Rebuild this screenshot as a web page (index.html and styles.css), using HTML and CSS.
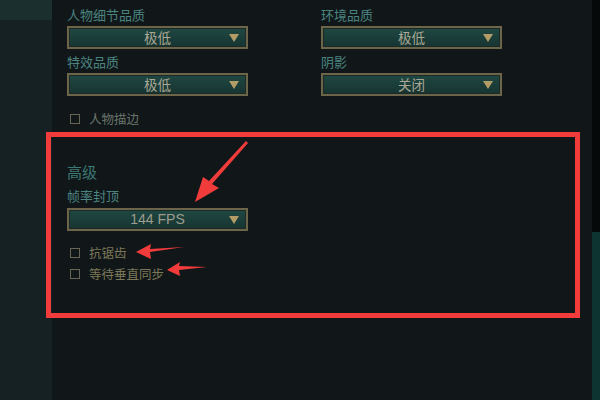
FILE: index.html
```html
<!DOCTYPE html>
<html lang="zh-CN">
<head>
    <meta charset="UTF-8">
    <meta name="viewport" content="width=device-width, initial-scale=1.0">
    <title>视频设置</title>
    <link rel="stylesheet" href="styles.css">
</head>
<body>
    <div class="app">
        <aside class="sidebar">
            <div class="sidebar-top"></div>
        </aside>

        <main class="settings">
            <div class="grid">
                <div class="field">
                    <label class="field-label">人物细节品质</label>
                    <div class="select"><span>极低</span><i class="caret"></i></div>
                </div>
                <div class="field">
                    <label class="field-label">环境品质</label>
                    <div class="select"><span>极低</span><i class="caret"></i></div>
                </div>
                <div class="field">
                    <label class="field-label">特效品质</label>
                    <div class="select"><span>极低</span><i class="caret"></i></div>
                </div>
                <div class="field">
                    <label class="field-label">阴影</label>
                    <div class="select"><span>关闭</span><i class="caret"></i></div>
                </div>
            </div>

            <div class="check check-first">
                <span class="box"></span><span class="check-text">人物描边</span>
            </div>

            <section class="advanced">
                <h2>高级</h2>
                <div class="field field-fps">
                    <label class="field-label">帧率封顶</label>
                    <div class="select select-fps"><span>144 FPS</span><i class="caret"></i></div>
                </div>
                <div class="check check-adv check-top">
                    <span class="box"></span><span class="check-text">抗锯齿</span>
                </div>
                <div class="check check-adv">
                    <span class="box"></span><span class="check-text">等待垂直同步</span>
                </div>
            </section>
        </main>

        <div class="scrollbar">
            <div class="thumb"></div>
        </div>
    </div>

    <!-- annotation layer: red frame and arrows drawn over the screenshot -->
    <svg class="marks" width="600" height="400" viewBox="0 0 600 400">
        <rect x="48.5" y="134.5" width="529" height="181" fill="none" stroke="#f23b3b" stroke-width="5"/>
        <polygon fill="#f23b3b" points="248,143 212,184 219,188 195,202 203,177 209,181 246,141"/>
        <polygon fill="#f23b3b" points="136,252 151,244 150,249 184,247 150,252 151,259"/>
        <polygon fill="#f23b3b" points="167,270 180,262 179,266 207,267 179,270 180,276"/>
    </svg>
</body>
</html>
```

FILE: styles.css
```css
html, body {
    margin: 0;
    padding: 0;
}

body {
    width: 600px;
    height: 400px;
    overflow: hidden;
    background-color: #111719;
    font-family: "Noto Sans CJK SC", "Noto Sans", sans-serif;
}

.app {
    display: flex;
    height: 400px;
}

.sidebar {
    width: 52px;
    background-color: #162123;
}

.sidebar-top {
    height: 20px;
    background-color: #1b2f2e;
}

.settings {
    flex: 1;
    padding: 5px 0 0 15px;
}

.grid {
    display: grid;
    grid-template-columns: 181px 181px;
    column-gap: 73px;
    row-gap: 3px;
}

.field-label {
    display: block;
    font-size: 13px;
    line-height: 19px;
    color: #4a8480; /* 青灰 */
    margin-bottom: 2px;
}

.select {
    position: relative;
    box-sizing: border-box;
    width: 181px;
    height: 23px;
    border: 2px solid #6c6549;
    background: linear-gradient(#1f4843, #173431);
    box-shadow: inset 0 0 0 1px #1c2a26;
    text-align: center;
    font-size: 13.5px;
    line-height: 19px;
    color: #aaa794;
}

.caret {
    position: absolute;
    right: 7px;
    top: 6px;
    width: 0;
    height: 0;
    border-left: 5px solid transparent;
    border-right: 5px solid transparent;
    border-top: 8px solid #b39c66;
}

.select-fps {
    font-family: "Liberation Sans", "Noto Sans CJK SC", sans-serif;
    font-size: 14px;
    color: #9d9c8c;
}

.check {
    display: flex;
    align-items: center;
    gap: 9px;
    padding-left: 3px;
    font-size: 12.5px;
    line-height: 21px;
}

.check-first {
    margin-top: 12px;
    color: #6a746b;
}

.box {
    box-sizing: border-box;
    width: 10px;
    height: 10px;
    border: 1px solid #676656;
}

.advanced {
    margin-top: 32px;
}

.advanced h2 {
    margin: 0 0 3px;
    font-size: 15px;
    font-weight: normal;
    line-height: 22px;
    color: #3c7874;
}

.field-fps .field-label {
    margin-bottom: 3px;
}

.check-adv {
    color: #7b7758;
}

.check-top {
    margin-top: 11px;
}

.scrollbar {
    width: 8px;
    background-color: #050909;
    display: flex;
    flex-direction: column;
    justify-content: flex-end;
}

.thumb {
    height: 168px;
    background-color: #0d3430;
}

.marks {
    position: absolute;
    left: 0;
    top: 0;
    pointer-events: none;
}
```
